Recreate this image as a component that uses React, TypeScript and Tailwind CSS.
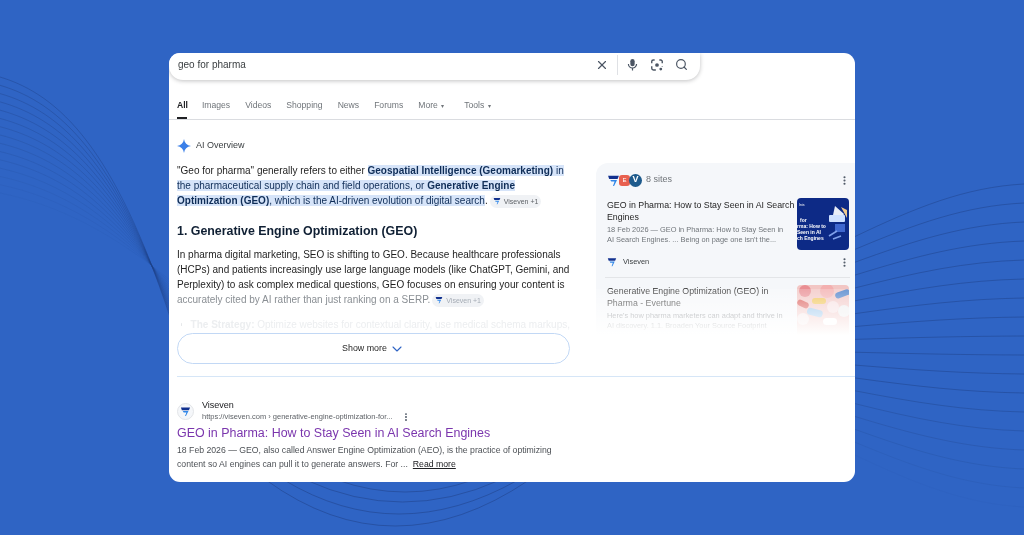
import { ChevronDown, MoreVertical, Search, X } from "lucide-react";

const FONT = "font-['Liberation_Sans',Arial,sans-serif]";

const tabs = ["Images", "Videos", "Shopping", "News", "Forums"];

const BackgroundLines = () => {
  const left = Array.from({ length: 15 }, (_, i) => {
    const t = i / 14;
    const mix = (a: number, b: number) => a + (b - a) * t;
    return {
      d: `M0 ${mix(77, 193)} C60 ${mix(95, 205)} ${115} ${mix(150, 235)} 170 ${mix(317, 280)}`,
      opacity: 0.62 - t * 0.52,
    };
  });
  const right = Array.from({ length: 18 }, (_, i) => {
    const yL = 237 + i * 12.8;
    const yR = 184 + i * 19;
    return {
      d: `M854 ${yL} C915 ${yL + (yR - yL) * 0.55} 965 ${yR - (yR - yL) * 0.06} 1024 ${yR}`,
      opacity: i < 12 ? 0.55 : 0.55 - (i - 11) * 0.08,
    };
  });
  return (
    <svg className="absolute inset-0" width="1024" height="535" fill="none" stroke="#1f4288">
      {left.map((l) => (
        <path key={l.d} d={l.d} strokeWidth="0.7" opacity={l.opacity} />
      ))}
      {right.map((l) => (
        <path key={l.d} d={l.d} strokeWidth="0.9" opacity={l.opacity} />
      ))}
      <path d="M266 480 Q393 572 529 480" strokeWidth="0.9" opacity="0.6" />
      <path d="M284 480 Q397 548 518 480" strokeWidth="0.9" opacity="0.6" />
      <path d="M306 480 Q402 524 500 480" strokeWidth="0.9" opacity="0.6" />
      <path d="M337 480 Q405 504 473 480" strokeWidth="0.9" opacity="0.6" />
    </svg>
  );
};

const VisevenMark = ({ size = 12 }: { size?: number }) => (
  <svg width={size} height={size} viewBox="0 0 24 24">
    <path d="M2 3 H22 L19.5 9 H4 Z" fill="#12318f" />
    <path d="M6 11 H18.5 L13 22 H11 L14 14 H8 Z" fill="#2f86e8" />
  </svg>
);

const Sparkle = () => (
  <svg width="14" height="14" viewBox="0 0 24 24">
    <path d="M12 0 C13 7 17 11 24 12 C17 13 13 17 12 24 C11 17 7 13 0 12 C7 11 11 7 12 0 Z" fill="#3a7fe8" />
  </svg>
);

const MicIcon = () => (
  <svg width="13" height="13" viewBox="0 0 24 24" fill="none" stroke="#4b5563" strokeWidth="2.2">
    <rect x="8" y="2" width="8" height="13" rx="4" fill="#4b5563" stroke="none" />
    <path d="M4.5 11 A7.5 7.5 0 0 0 19.5 11 M12 18.5 V23" />
  </svg>
);

const LensIcon = () => (
  <svg width="14" height="14" viewBox="0 0 24 24" fill="none" stroke="#4b5563" strokeWidth="2.4">
    <path d="M8 3.5 H5.5 A2.5 2.5 0 0 0 3 6 V9 M16 3.5 H18.5 A2.5 2.5 0 0 1 21 6 V9 M3 14 V17.5 A3 3 0 0 0 6 20.5 H10 M21 14 V15" />
    <circle cx="12" cy="12" r="3.2" fill="#4b5563" stroke="none" />
    <circle cx="18.5" cy="19" r="2.4" fill="#4b5563" stroke="none" />
  </svg>
);

const SourceChip = ({ dim }: { dim?: boolean }) => (
  <span
    className={`ml-[2px] inline-flex h-[13px] items-center gap-[3px] rounded-full bg-[#f0f2f5] px-[3px] align-middle text-[7px] font-normal ${
      dim ? "text-[#a5acb5]" : "text-[#5f6368]"
    }`}
  >
    <VisevenMark size={8} />
    Viseven +1
  </span>
);

const Mark = ({ children }: { children: React.ReactNode }) => (
  <span className="bg-[#d6e4f9] text-[#0f2d57]">{children}</span>
);

const Thumb = () => (
  <div className="relative -mt-[1px] h-[52px] w-[52px] shrink-0 overflow-hidden rounded-[4px] bg-[#0d2a86]">
    <div className="whitespace-nowrap pt-[4px] text-[5px] font-bold leading-[6px] text-white">
      <div className="pl-[2px] text-[3.5px] font-normal">Inis</div>
      <div className="pl-[3px] pt-[9px]">for</div>
      <div>rma: How to</div>
      <div>Seen in AI</div>
      <div>ch Engines</div>
    </div>
    <svg className="absolute inset-0" width="52" height="52" viewBox="0 0 52 52">
      <path d="M38 8 L47 16 L44 22 L36 17 Z" fill="#e9edf7" />
      <path d="M44 9 L50 12 L50 20 Z" fill="#f0c98c" />
      <rect x="32" y="17" width="16" height="7" rx="1" fill="#cfe0ff" />
      <path d="M38 26 h10 v8 h-10 z" fill="#3f67cf" />
      <path d="M32 38 l8 -5 M36 41 l8 -3" stroke="#7fa0ea" strokeWidth="1.6" />
    </svg>
  </div>
);

const PillsThumb = () => (
  <div className="h-[52px] w-[52px] shrink-0 overflow-hidden rounded-[4px] bg-[#f2c6c4]">
    <svg width="52" height="52" viewBox="0 0 52 52">
      <circle cx="8" cy="6" r="6" fill="#e98e93" />
      <circle cx="30" cy="6" r="7" fill="#f3b0b0" />
      <rect x="38" y="6" width="15" height="6" rx="3" fill="#4b80c9" transform="rotate(-20 45 9)" />
      <rect x="15" y="13" width="14" height="6" rx="3" fill="#f0c24f" />
      <rect x="0" y="16" width="12" height="6" rx="3" fill="#d9534f" transform="rotate(25 6 19)" />
      <circle cx="36" cy="22" r="6" fill="#f7dfe0" />
      <rect x="10" y="24" width="16" height="7" rx="3.5" fill="#8fc0ea" transform="rotate(15 18 27)" />
      <circle cx="47" cy="26" r="6" fill="#eeeeee" />
      <circle cx="6" cy="34" r="6" fill="#f5e6e6" />
      <rect x="26" y="33" width="14" height="7" rx="3.5" fill="#ffffff" />
    </svg>
  </div>
);

const App = () => {
  return (
    <div className={`relative h-[535px] w-full overflow-hidden bg-[#2f64c4] pl-[169px] pt-[53px] ${FONT}`}>
      <BackgroundLines />
      <div className="relative flex h-[429px] w-[686px] flex-col overflow-hidden rounded-[11px] bg-white blur-[0.35px]">
        <div className="flex h-[27px] w-[531px] shrink-0 items-center rounded-br-[14px] rounded-bl-[14px] bg-white pb-[4px] pl-[9px] pr-[12.5px] shadow-[0_1px_4px_rgba(32,33,36,0.28)]">
          <span className="flex-1 text-[10px] text-[#3c4043]">geo for pharma</span>
          <X size={14} strokeWidth={2} color="#4b5563" />
          <div className="mx-[8px] h-[20px] w-px bg-[#dfe1e5]" />
          <MicIcon />
          <div className="ml-[11.5px]">
            <LensIcon />
          </div>
          <Search size={13} strokeWidth={2.2} color="#4b5563" className="ml-[10.5px]" />
        </div>

        <div className="flex h-[40px] shrink-0 items-end border-b border-[#dadce0] pl-[8px] text-[8.6px] text-[#70757a]">
          <div className="flex h-[22px] flex-col justify-between pt-[2px]">
            <span className="font-bold text-[#202124]">All</span>
            <div className="h-[2px] w-[10px] bg-[#202124]" />
          </div>
          <div className="ml-[14px] flex h-[22px] gap-[15px] pt-[2px]">
            {tabs.map((tab) => (
              <span key={tab}>{tab}</span>
            ))}
            <span>
              More <span className="ml-[1px] text-[6px]">▾</span>
            </span>
            <span className="ml-[5px]">
              Tools <span className="ml-[1px] text-[6px]">▾</span>
            </span>
          </div>
        </div>

        <div className="flex h-[256px] shrink-0 pl-[8px]">
          <div className="w-[393px] shrink-0 pt-[19px]">
            <div className="flex h-[14px] items-center gap-[5px] text-[9px] text-[#3c4043]">
              <Sparkle />
              AI Overview
            </div>
            <p className="mt-[10px] text-[10px] leading-[15px] text-[#1f1f1f] [&>span]:block [&>span]:whitespace-nowrap">
              <span>
                "Geo for pharma" generally refers to either{" "}
                <Mark>
                  <b>Geospatial Intelligence (Geomarketing)</b> in
                </Mark>
              </span>
              <span>
                <Mark>
                  the pharmaceutical supply chain and field operations, or <b>Generative Engine</b>
                </Mark>
              </span>
              <span>
                <Mark>
                  <b>Optimization (GEO)</b>, which is the AI-driven evolution of digital search
                </Mark>
                .
                <SourceChip />
              </span>
            </p>
            <h2 className="mt-[14px] text-[12.4px] font-bold leading-[18px] text-[#0f1f33]">
              1. Generative Engine Optimization (GEO)
            </h2>
            <p className="mt-[7px] text-[10px] leading-[15px] text-[#1f1f1f] [&>span]:block [&>span]:whitespace-nowrap">
              <span>In pharma digital marketing, SEO is shifting to GEO. Because healthcare professionals</span>
              <span>(HCPs) and patients increasingly use large language models (like ChatGPT, Gemini, and</span>
              <span>Perplexity) to ask complex medical questions, GEO focuses on ensuring your content is</span>
              <span className="text-[#8a8f94]">
                accurately cited by AI rather than just ranking on a SERP.
                <SourceChip dim />
              </span>
            </p>
            <div className="mt-[10px] flex h-[15px] items-center gap-[9px] whitespace-nowrap text-[10px] text-[#eceef0]">
              <div className="ml-[4px] h-[3px] w-[3px] rounded-full bg-[#e6e8ea]" />
              <span>
                <b>The Strategy:</b> Optimize websites for contextual clarity, use medical schema markups,
              </span>
            </div>
            <button className="mt-[1px] flex h-[31px] w-full items-center justify-center gap-[2px] rounded-full border border-[#c2d8f5] bg-white text-[8.9px] text-[#1f1f1f]">
              Show more
              <ChevronDown size={16} strokeWidth={1.6} color="#2f64c4" />
            </button>
          </div>

          <div className="relative ml-[26px] mt-[43px] h-[172px] flex-1 overflow-hidden rounded-tl-[12px] bg-[#f5f7fa] pl-[11px] pr-[5px]">
            <div className="flex h-[34px] items-center">
              <div className="flex items-center">
                <VisevenMark size={13} />
                <span className="-ml-[1px] flex h-[11px] w-[11px] items-center justify-center rounded-[3px] bg-[#e8604f] text-[6px] text-white">
                  E
                </span>
                <span className="-ml-[1px] flex h-[13px] w-[13px] items-center justify-center rounded-full bg-[#1d5a8c] text-[9px] font-bold text-white">
                  V
                </span>
              </div>
              <span className="ml-[4px] flex-1 text-[9px] text-[#70757a]">8 sites</span>
              <MoreVertical size={11} strokeWidth={2.6} color="#4b5563" />
            </div>
            <div className="mt-[2px] flex items-start">
              <div className="w-[190px] shrink-0">
                <div className="text-[8.8px] leading-[12px] text-[#1f1f1f]">
                  GEO in Pharma: How to Stay Seen in AI Search Engines
                </div>
                <div className="mt-[2px] text-[7.4px] leading-[10px] text-[#70757a]">
                  18 Feb 2026 — GEO in Pharma: How to Stay Seen in
                  <br />
                  AI Search Engines. ... Being on page one isn't the...
                </div>
              </div>
              <Thumb />
            </div>
            <div className="flex h-[24px] items-center gap-[5px] text-[7.4px] text-[#3c4043]">
              <VisevenMark size={10} />
              <span className="flex-1 pl-[1px]">Viseven</span>
              <MoreVertical size={11} strokeWidth={2.6} color="#4b5563" />
            </div>
            <div className="-ml-[2px] mt-[3px] h-px bg-[#e3e5e8]" />
            <div className="mt-[7px] flex items-start">
              <div className="w-[190px] shrink-0">
                <div className="text-[8.8px] leading-[12px] text-[#1f1f1f]">
                  Generative Engine Optimization (GEO) in
                  <br />
                  Pharma - Evertune
                </div>
                <div className="mt-[2px] text-[7.4px] leading-[10px] text-[#70757a]">
                  Here's how pharma marketers can adapt and thrive in
                  <br />
                  AI discovery. 1.1. Broaden Your Source Footprint
                </div>
              </div>
              <PillsThumb />
            </div>
            <div className="absolute bottom-0 left-0 right-0 h-[46px] bg-gradient-to-b from-white/20 to-white" />
          </div>
        </div>

        <div className="ml-[8px] h-px shrink-0 bg-[#d6e6f7]" />

        <div className="pl-[8px] pt-[22px]">
          <div className="flex items-center gap-[8px]">
            <span className="flex h-[17px] w-[17px] items-center justify-center rounded-full border border-[#e3e5e8] bg-[#f5f7fa]">
              <VisevenMark size={11} />
            </span>
            <div>
              <div className="text-[9px] leading-[12px] text-[#202124]">Viseven</div>
              <div className="flex items-center text-[7.5px] leading-[12px] text-[#5f6368]">
                https://viseven.com › generative-engine-optimization-for...
                <MoreVertical size={10} strokeWidth={2.6} color="#4b5563" className="ml-[8px]" />
              </div>
            </div>
          </div>
          <div className="mt-[2px] text-[12.45px] leading-[16px] text-[#7a35ad]">
            GEO in Pharma: How to Stay Seen in AI Search Engines
          </div>
          <div className="mt-[2px] text-[8.7px] leading-[14px] text-[#4d5156]">
            <div>18 Feb 2026 — GEO, also called Answer Engine Optimization (AEO), is the practice of optimizing</div>
            <div>
              content so AI engines can pull it to generate answers. For ...
              <span className="ml-[5px] text-[#202124] underline">Read more</span>
            </div>
          </div>
        </div>
      </div>
    </div>
  );
};

export default App;
